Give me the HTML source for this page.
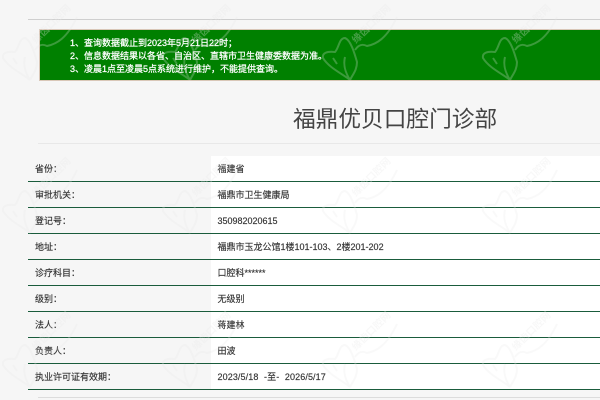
<!DOCTYPE html>
<html lang="zh">
<head>
<meta charset="utf-8">
<style>
html,body{margin:0;padding:0;width:600px;height:400px;overflow:hidden;background:#f6f6f6}
body{position:relative;font-family:"Liberation Sans","Noto Sans CJK SC",sans-serif;color:#333}
.hl{position:absolute;right:0}
.box{position:absolute;left:39px;top:29px;width:561px;height:50px;background:#008000;border:1px solid #d9c7b8;border-right:0;box-sizing:content-box}
.n{position:absolute;left:70px;color:#fff;font-size:9px;line-height:13px;white-space:nowrap;-webkit-text-stroke:.25px #fff}
.t{position:absolute;left:293px;top:103px;font-size:22.7px;line-height:32px;color:#444;white-space:nowrap}
.cell{position:absolute;left:211px;top:156px;right:0;height:233px;background:#fff}
.l{position:absolute;left:28px;right:0;height:1px;background:#1a5c3c}
.k,.v{position:absolute;font-size:9px;line-height:12px;white-space:nowrap;color:#333;-webkit-text-stroke:.15px #333}
.k{left:35px}
.v{left:217.5px}
svg.w{position:absolute;left:0;top:0;pointer-events:none}
</style>
</head>
<body>
<div class="hl" style="left:28px;top:19px;height:1px;background:#cfcfcf"></div>
<div class="box"></div>
<div class="n" style="top:37px">1、查询数据截止到2023年5月21日22时；</div>
<div class="n" style="top:50px">2、信息数据结果以各省、自治区、直辖市卫生健康委数据为准。</div>
<div class="n" style="top:63px">3、凌晨1点至凌晨5点系统进行维护，不能提供查询。</div>
<div class="t">福鼎优贝口腔门诊部</div>
<div class="hl" style="left:38px;top:143px;height:1px;background:#e8e8e8"></div>
<div class="cell"></div>
<div class="l" style="top:181px"></div>
<div class="l" style="top:207px"></div>
<div class="l" style="top:233px"></div>
<div class="l" style="top:259px"></div>
<div class="l" style="top:285px"></div>
<div class="l" style="top:311px"></div>
<div class="l" style="top:337px"></div>
<div class="l" style="top:363px"></div>
<div class="l" style="top:389px"></div>
<div class="hl" style="left:38px;top:397px;height:1px;background:#dcdcdc"></div>

<div class="k" style="top:163px">省份：</div><div class="v" style="top:163px">福建省</div>
<div class="k" style="top:189px">审批机关：</div><div class="v" style="top:189px">福鼎市卫生健康局</div>
<div class="k" style="top:215px">登记号：</div><div class="v" style="top:215px">350982020615</div>
<div class="k" style="top:241px">地址：</div><div class="v" style="top:241px">福鼎市玉龙公馆1楼101-103、2楼201-202</div>
<div class="k" style="top:267px">诊疗科目：</div><div class="v" style="top:267px">口腔科******</div>
<div class="k" style="top:293px">级别：</div><div class="v" style="top:293px">无级别</div>
<div class="k" style="top:319px">法人：</div><div class="v" style="top:319px">蒋建林</div>
<div class="k" style="top:345px">负责人：</div><div class="v" style="top:345px">田波</div>
<div class="k" style="top:371px">执业许可证有效期：</div><div class="v" style="top:371px;word-spacing:3px;letter-spacing:.1px">2023/5/18 -至- 2026/5/17</div>

<svg class="w" width="600" height="400" viewBox="0 0 600 400" xmlns="http://www.w3.org/2000/svg">
<defs>
<g id="m">
<path d="M35 80C28 74 14 68 8 58C7 53 12 51 20 52C24 48 24 38 30 38C36 40 40 55 42 62C42 70 38 74 35 80M30 57C28 65 30 72 35 80M40 50C44 44 48 44 52 46C62 44 72 38 82 17M18 58L22 64" fill="none" stroke="rgba(232,232,232,.26)" stroke-width="2"/>
<text x="0" y="0" transform="translate(41 44) rotate(-45)" font-size="10" font-weight="700" fill="rgba(232,232,232,.3)" font-family="'Liberation Sans','Noto Sans CJK SC',sans-serif">缘齿口腔网</text>
</g>
</defs>
<use href="#m" x="-5" y="0"/><use href="#m" x="155" y="0"/><use href="#m" x="315" y="0"/><use href="#m" x="475" y="0"/>
<use href="#m" x="-5" y="153"/><use href="#m" x="155" y="153"/><use href="#m" x="315" y="153"/><use href="#m" x="475" y="153"/>
<use href="#m" x="-5" y="307"/><use href="#m" x="155" y="307"/><use href="#m" x="315" y="307"/><use href="#m" x="475" y="307"/>
</svg>
</body>
</html>
